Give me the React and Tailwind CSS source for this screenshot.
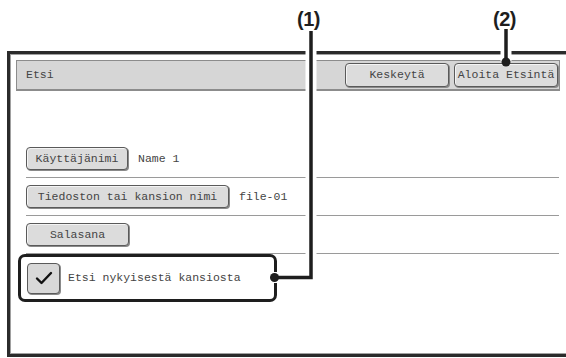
import React from 'react';

const mono = { fontFamily: '"Liberation Mono", "DejaVu Sans Mono", monospace' };

function Btn({ children, className = '' }) {
  return (
    <div
      className={`flex items-center justify-center bg-[#dcdcdc] border border-[#5a5a5a] rounded-[4px] shadow-[1px_1px_0_#8a8a8a,inset_1px_1px_0_#f4f4f4] text-[11.5px] text-[#444] ${className}`}
    >
      {children}
    </div>
  );
}

function Row({ label, value, btnW }) {
  return (
    <div className="flex flex-col">
      <div className="flex items-center h-[23px]">
        <Btn className={`${btnW} h-[23px]`}>{label}</Btn>
        {value && <span className="ml-[10px] text-[11.5px] text-[#444]">{value}</span>}
      </div>
      <div className="mt-[7px] mb-[7px] h-px bg-[#9a9a9a]" />
    </div>
  );
}

export default function App() {
  return (
    <div className="relative w-[566px] h-[358px] bg-white overflow-hidden" style={mono}>
      {/* panel */}
      <div className="ml-[7px] mt-[51px] h-[306px] border-l-[3px] border-t-[3px] border-b-[3px] border-[#2b2b2b]">
        <div className="h-full border-l border-t border-b border-[#a0a0a0] pl-[5px] pt-[5px]">
          <div className="w-[544px] h-[31px] bg-[#d6d6d6] border border-[#8c8c8c] border-b-2 flex items-center pl-[9px] pr-[1px]">
            <span className="text-[11.5px] text-[#444] flex-1">Etsi</span>
            <Btn className="w-[104px] h-[24px]">Keskeytä</Btn>
            <Btn className="w-[104px] h-[24px] ml-[5px]">Aloita Etsintä</Btn>
          </div>

          <div className="pl-[10px] pt-[56px] w-[543px]">
            <Row label="Käyttäjänimi" value="Name 1" btnW="w-[102px]" />
            <Row label="Tiedoston tai kansion nimi" value="file-01" btnW="w-[203px]" />
            <Row label="Salasana" btnW="w-[103px]" />
          </div>
        </div>
      </div>

      {/* callout box (1) */}
      <div className="absolute left-[18px] top-[254px] w-[259px] h-[48px] border-[3px] border-[#1e1e1e] rounded-[7px] bg-white flex items-center pl-[6px]">
        <div className="w-[33px] h-[31px] bg-[#d8d8d8] border border-[#5a5a5a] rounded-[4px] shadow-[1px_1px_0_#8a8a8a] flex items-center justify-center">
          <svg width="18" height="14" viewBox="0 0 18 14">
            <path d="M2 7.5 L6.5 12 L16 2" fill="none" stroke="#111" strokeWidth="2.4" strokeLinecap="round" strokeLinejoin="round" />
          </svg>
        </div>
        <span className="ml-[8px] text-[11.5px] text-[#444]">Etsi nykyisestä kansiosta</span>
      </div>

      {/* leader lines */}
      <svg className="absolute inset-0 pointer-events-none" width="566" height="358">
        <path d="M311 31 V277.5 H274" fill="none" stroke="#fff" strokeWidth="11" />
        <path d="M506 29 V61" fill="none" stroke="#fff" strokeWidth="11" />
        <path d="M311 31 V277.5 H274" fill="none" stroke="#1e1e1e" strokeWidth="3.5" />
        <circle cx="274.5" cy="277.5" r="4.5" fill="#1e1e1e" />
        <path d="M506 29 V61" fill="none" stroke="#1e1e1e" strokeWidth="3.5" />
        <circle cx="506" cy="62" r="4.5" fill="#1e1e1e" />
      </svg>

      <span
        className="absolute left-[297px] top-[4px] text-[20px] font-bold text-[#1e1e1e] tracking-[-0.5px]"
        style={{ fontFamily: '"Liberation Sans", Arial, sans-serif' }}
      >
        (1)
      </span>
      <span
        className="absolute left-[493px] top-[4px] text-[20px] font-bold text-[#1e1e1e] tracking-[-0.5px]"
        style={{ fontFamily: '"Liberation Sans", Arial, sans-serif' }}
      >
        (2)
      </span>
    </div>
  );
}
